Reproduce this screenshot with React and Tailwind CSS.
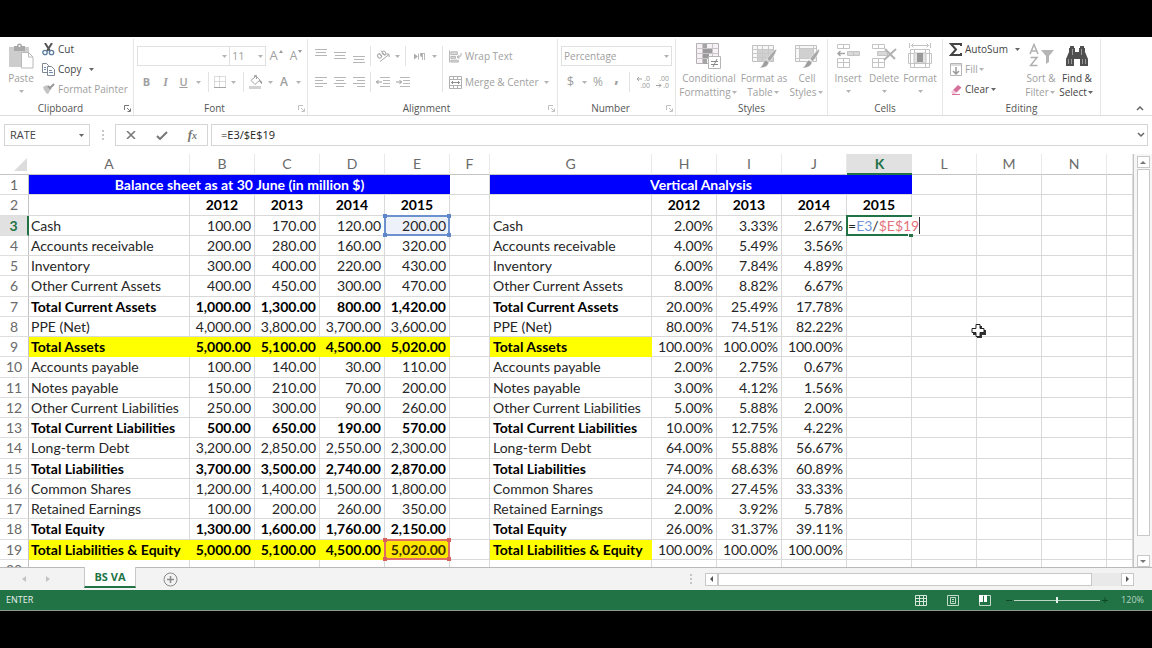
import { clsx } from "clsx";

const COLUMNS = [
  { name: "A", width: "w-[161px]" },
  { name: "B", width: "w-[65px]" },
  { name: "C", width: "w-[65px]" },
  { name: "D", width: "w-[65px]" },
  { name: "E", width: "w-[65px]" },
  { name: "F", width: "w-[40px]" },
  { name: "G", width: "w-[162px]" },
  { name: "H", width: "w-[65px]" },
  { name: "I", width: "w-[65px]" },
  { name: "J", width: "w-[65px]" },
  { name: "K", width: "w-[65px]" },
  { name: "L", width: "w-[65px]" },
  { name: "M", width: "w-[65px]" },
  { name: "N", width: "w-[65px]" },
  { name: "", width: "" },
];

const ROWS = [
  { label: "Cash", values: ["100.00", "170.00", "120.00", "200.00"], pct: ["2.00%", "3.33%", "2.67%"] },
  { label: "Accounts receivable", values: ["200.00", "280.00", "160.00", "320.00"], pct: ["4.00%", "5.49%", "3.56%"] },
  { label: "Inventory", values: ["300.00", "400.00", "220.00", "430.00"], pct: ["6.00%", "7.84%", "4.89%"] },
  { label: "Other Current Assets", values: ["400.00", "450.00", "300.00", "470.00"], pct: ["8.00%", "8.82%", "6.67%"] },
  { label: "Total Current Assets", bold: true, values: ["1,000.00", "1,300.00", "800.00", "1,420.00"], pct: ["20.00%", "25.49%", "17.78%"] },
  { label: "PPE (Net)", values: ["4,000.00", "3,800.00", "3,700.00", "3,600.00"], pct: ["80.00%", "74.51%", "82.22%"] },
  { label: "Total Assets", bold: true, fill: true, values: ["5,000.00", "5,100.00", "4,500.00", "5,020.00"], pct: ["100.00%", "100.00%", "100.00%"] },
  { label: "Accounts payable", values: ["100.00", "140.00", "30.00", "110.00"], pct: ["2.00%", "2.75%", "0.67%"] },
  { label: "Notes payable", values: ["150.00", "210.00", "70.00", "200.00"], pct: ["3.00%", "4.12%", "1.56%"] },
  { label: "Other Current Liabilities", values: ["250.00", "300.00", "90.00", "260.00"], pct: ["5.00%", "5.88%", "2.00%"] },
  { label: "Total Current Liabilities", bold: true, values: ["500.00", "650.00", "190.00", "570.00"], pct: ["10.00%", "12.75%", "4.22%"] },
  { label: "Long-term Debt", values: ["3,200.00", "2,850.00", "2,550.00", "2,300.00"], pct: ["64.00%", "55.88%", "56.67%"] },
  { label: "Total Liabilities", bold: true, values: ["3,700.00", "3,500.00", "2,740.00", "2,870.00"], pct: ["74.00%", "68.63%", "60.89%"] },
  { label: "Common Shares", values: ["1,200.00", "1,400.00", "1,500.00", "1,800.00"], pct: ["24.00%", "27.45%", "33.33%"] },
  { label: "Retained Earnings", values: ["100.00", "200.00", "260.00", "350.00"], pct: ["2.00%", "3.92%", "5.78%"] },
  { label: "Total Equity", bold: true, values: ["1,300.00", "1,600.00", "1,760.00", "2,150.00"], pct: ["26.00%", "31.37%", "39.11%"] },
  { label: "Total Liabilities & Equity", bold: true, fill: true, values: ["5,000.00", "5,100.00", "4,500.00", "5,020.00"], pct: ["100.00%", "100.00%", "100.00%"] },
];

const YEARS = ["2012", "2013", "2014", "2015"];

/* ---------- small ribbon pieces ---------- */

function Caret({ className = "w-2", dark }) {
  return (
    <span className={clsx("flex h-3 shrink-0 items-center justify-center", className)}>
      <svg width="5" height="3" viewBox="0 0 5 3" fill={dark ? "#666" : "#b4b4b4"}>
        <path d="M0 0h5L2.5 3z" />
      </svg>
    </span>
  );
}

function Sep({ className = "mx-1" }) {
  return <span className={clsx("w-px shrink-0 self-stretch bg-[#e3e3e3]", className)} />;
}

function Tool({ label, className, children }) {
  return (
    <button type="button" aria-label={label} className={clsx("flex h-5 shrink-0 items-center justify-center", className)}>
      {children}
    </button>
  );
}

function Group({ title, className, launcher, dark, children }) {
  return (
    <section className={clsx("flex shrink-0 flex-col border-r border-[#e6e6e6]", className)}>
      <div className="h-[60px]">{children}</div>
      <div className="flex h-4 items-center pt-0.5">
        <h2 className="flex-1 text-center leading-4 text-[#555]">{title}</h2>
        {launcher && (
          <button type="button" aria-label={`${title} settings`} className="flex w-3 justify-center">
            <svg width="7" height="7" viewBox="0 0 7 7" fill="none" stroke={dark ? "#777" : "#c0c0c0"}>
              <path d="M.5 5V.5H5M3 3l3 3M6.500 3.500v3h-3" />
            </svg>
          </button>
        )}
      </div>
    </section>
  );
}

function BigButton({ icon, lines, className, dark, caretBelow }) {
  return (
    <button type="button" className={clsx("flex shrink-0 flex-col items-center pt-1 leading-[14px] whitespace-nowrap", dark ? "text-[#444]" : "text-[#a0a0a0]", className)}>
      <span className="mb-0.5 flex h-[26px] items-center">{icon}</span>
      <span>{lines[0]}</span>
      {caretBelow ? (
        <Caret />
      ) : (
        <span className="flex items-center">
          {lines[1]}
          <Caret dark={dark} />
        </span>
      )}
    </button>
  );
}

function SmallButton({ icon, label, dark, caret, caretClass }) {
  return (
    <button type="button" className={clsx("flex h-5 items-center whitespace-nowrap", dark ? "text-[#444]" : "text-[#a0a0a0]")}>
      <span className="mr-[3px] flex w-[13px] justify-center">{icon}</span>
      {label}
      {caret && <Caret className={caretClass} dark={dark} />}
    </button>
  );
}

function Lines({ d }) {
  return (
    <svg width="12" height="16" viewBox="0 0 12 16" stroke="#b6b6b6" fill="none">
      <path d={d} />
    </svg>
  );
}

/* ---------- icons ---------- */

const PasteIcon = (
  <svg width="25" height="26" viewBox="0 0 25 26">
    <path d="M0 4h20v20H0z" fill="#cdcdcd" />
    <path d="M5 3h3a2.500 2.500 0 015 0h3v5H5z" fill="#a9a9a9" />
    <circle cx="10.500" cy="3" r="1" fill="#fff" />
    <path d="M12.500 9.500h7l4.500 4.500v11H12.500z" fill="#fff" stroke="#b9b9b9" />
    <path d="M19.500 9.500V14H24" fill="none" stroke="#b9b9b9" />
  </svg>
);

const CutIcon = (
  <svg width="13" height="13" viewBox="0 0 13 13" fill="none">
    <path d="M3 0l5 8M10 0L5 8" stroke="#555" strokeWidth="2" />
    <circle cx="3" cy="9.500" r="2.200" stroke="#5d7d9e" strokeWidth="1.300" />
    <circle cx="9.500" cy="9.500" r="2.200" stroke="#5d7d9e" strokeWidth="1.300" />
  </svg>
);

const CopyIcon = (
  <svg width="13" height="13" viewBox="0 0 13 13" fill="#fff" stroke="#7d8791">
    <path d="M.5.5h4l2 2v7h-6z" />
    <path d="M5.500 3.500h4l3 3v6h-7z" />
    <path d="M2 4.500h2M2 6.500h2M7 7.500h3M7 9.500h4" stroke="#6d8fb3" />
  </svg>
);

const PainterIcon = (
  <svg width="12" height="12" viewBox="0 0 12 12">
    <path d="M0 4l4-2 4 4-3 5-2-1-1-2-1-1z" fill="#c4c4c4" />
    <path d="M5 3l3 3M7.500 4.500L11 1" stroke="#999" strokeWidth="2" fill="none" />
  </svg>
);

const BordersIcon = (
  <svg width="12" height="12" viewBox="0 0 12 12" fill="none" stroke="#b8b8b8">
    <path d="M.5.500h11v11H.500zM.500 5.500h11M5.500.500v11" strokeDasharray="1 1" />
    <path d="M0 11.500h12" stroke="#a5a5a5" />
  </svg>
);

const BucketIcon = (
  <svg width="15" height="14" viewBox="0 0 15 14" fill="none">
    <path d="M2 5.500L7 1l4 4-5 4.500z" stroke="#a5a5a5" />
    <path d="M5.500 3V.500h2V4" stroke="#a5a5a5" />
    <path d="M11 5c2 1 2.500 3 2 4-1 0-1.500-2-3-3z" fill="#999" />
    <path d="M0 11h12v3H0z" fill="#d2d2d2" />
  </svg>
);

const OrientIcon = (
  <svg width="14" height="13" viewBox="0 0 14 13" fill="none" stroke="#a8a8a8">
    <ellipse cx="3.500" cy="6" rx="1.800" ry="2.200" transform="rotate(-40 3.500 6)" />
    <path d="M3 3l3 4M5 .500l4 5" />
    <ellipse cx="8" cy="3" rx="1.500" ry="2" transform="rotate(-40 8 3)" />
    <path d="M4 11.500l9-7M10 4h3v3" />
  </svg>
);

const RtlIcon = (
  <svg width="12" height="9" viewBox="0 0 12 9">
    <path d="M0 1.500L4 4.500 0 7.500z" fill="#acacac" />
    <path d="M4.500 1.500v6M8.500 1v7M10.500 1v7M6 1.500h5" stroke="#b8b8b8" fill="none" />
    <path d="M8 1a2 2 0 000 4z" fill="#acacac" />
  </svg>
);

const WrapIcon = (
  <svg width="14" height="13" viewBox="0 0 14 13" fill="none" stroke="#b0b0b0">
    <path d="M.500 0v13" />
    <path d="M2 1.500h7v3H2zM2 6.500h5v2H2zM2 10.500h8v2H2z" fill="#ddd" />
    <path d="M13 3c0 4-1 4-4 4M11 5L9 7l2 2" stroke="#999" />
  </svg>
);

const MergeIcon = (
  <svg width="13" height="13" viewBox="0 0 13 13" fill="none" stroke="#b0b0b0">
    <path d="M.500.500h12v12H.500zM.500 3.500h12M.500 9.500h12M4.500.500v3M8.500.500v3M4.500 9.500v3M8.500 9.500v3" />
    <path d="M2 6.500h9M4 5L2.500 6.500 4 8M9 5l1.500 1.500L9 8" stroke="#8f8f8f" />
  </svg>
);

function IndentIcon({ right }) {
  return (
    <svg width="14" height="11" viewBox="0 0 14 11" fill="none" stroke="#b8b8b8">
      <path d="M4 .500h10M7 3.500h7M7 6.500h7M4 9.500h10" />
      <path d={right ? "M0 5h6M3.500 3L5.500 5 3.500 7" : "M0 5h6M2.500 3L.500 5l2 2"} stroke="#999" />
    </svg>
  );
}

function DecimalIcon({ top, bottom, arrow }) {
  return (
    <svg width="14" height="14" viewBox="0 0 14 14">
      <text x="13" y="6" textAnchor="end" fontSize="7" fill="#999">{top}</text>
      <text x="13" y="13" textAnchor="end" fontSize="7" fill="#999">{bottom}</text>
      <path d={arrow} stroke="#a3a3a3" fill="none" />
    </svg>
  );
}

const ConditionalIcon = (
  <svg width="26" height="26" viewBox="0 0 26 26" fill="none">
    <path d="M.500.500h22v20H.500z" fill="#f6f1f4" stroke="#b5b0b3" />
    <path d="M7 1h4v5H7zM7 16h4v5H7z" fill="#a5a5a5" />
    <path d="M7 6h9v4H7zM7 11h6v4H7z" fill="#9a9a9a" />
    <path d="M.500 5.500h22M.500 10.500h22M.500 15.500h22M6.500.500v20M16.500.500v20" stroke="#c9c4c7" />
    <path d="M12.500 13.500h12v12h-12z" fill="#fff" stroke="#b5b5b5" />
    <path d="M15 18.500h7M15 21.500h7M21 16l-4 8" stroke="#888" />
  </svg>
);

function BrushTable({ wide }) {
  return (
    <svg width="26" height="26" viewBox="0 0 26 26" fill="none">
      <path d="M1.500 2.500h21v16h-21z" fill="#f8f8f8" stroke="#c0c0c0" />
      <path d={wide ? "M6 6h13v9H6z" : "M7 7h15v11H7z"} fill="#d0d0d0" />
      <path d={wide ? "M1.500 5.500h21M1.500 15.500h21M5.500 2.500v16M19.500 2.500v16" : "M1.500 6.500h21M1.500 10.500h21M1.500 14.500h21M6.500 2.500v16M11.500 2.500v16M17.500 2.500v16"} stroke="#c8c8c8" />
      <path d="M25.500 6c-2 .500-7.500 6.500-9.500 10l2.500 2.500C21.500 15 25.500 10 25.500 6z" fill="#a8a8a8" stroke="#fff" strokeWidth=".5" />
      <path d="M15 17l3 2.500c-1 4-5 5.500-10 5.500 2-1 3-2 4-4.500.500-1.500 1.500-3 3-3.500z" fill="#9e9e9e" stroke="#fff" strokeWidth=".5" />
    </svg>
  );
}

const InsertIcon = (
  <svg width="24" height="24" viewBox="0 0 24 24" fill="none" stroke="#c4c4c4">
    <path d="M1.500.500h12v4h-12zM7.500.500v4M1.500 14.500h12v9h-12zM7.500 14.500v9M1.500 18.500h12" />
    <path d="M11.500 7.500h12v4h-12z" fill="#d8d8d8" />
    <path d="M17.500 7.500v4" />
    <path d="M2 9.500h7M4.500 7L2 9.500 4.500 12" stroke="#a5a5a5" strokeWidth="1.500" />
  </svg>
);

const DeleteIcon = (
  <svg width="26" height="24" viewBox="0 0 26 24" fill="none" stroke="#c4c4c4">
    <path d="M1.500.500h12v4h-12zM7.500.500v4M1.500 14.500h12v9h-12zM7.500 14.500v9M1.500 18.500h12" />
    <path d="M6.500 7.500h10v4h-10z" fill="#d8d8d8" />
    <path d="M14 5l10 10M25 5L13 16" stroke="#b2b2b2" strokeWidth="2" />
  </svg>
);

const FormatIcon = (
  <svg width="25" height="26" viewBox="0 0 25 26" fill="none" stroke="#c4c4c4">
    <path d="M1.500 0v5M22.500 0v5M3 2.500h18M5.500.500l-2 2 2 2M18.500.500l2 2-2 2" />
    <path d="M2.500 6.500h19v18h-19zM.500 10.500h23v10H.500zM6.500 6.500v18M17.500 6.500v18" />
    <path d="M6 10h12v10H6z" fill="#e4e4e4" />
    <path d="M9 10h6v9H9z" fill="#999" stroke="none" />
  </svg>
);

const SumIcon = (
  <svg width="13" height="13" viewBox="0 0 13 13" fill="none" stroke="#444" strokeWidth="2">
    <path d="M12 3V1H2l5 5.500L2 12h10v-2" />
  </svg>
);

const FillIcon = (
  <svg width="12" height="13" viewBox="0 0 12 13" fill="none" stroke="#b5b5b5">
    <path d="M.500.500h11v12H.500zM0 2h12" />
    <path d="M6 4v7M3 8l3 3 3-3" stroke="#999" strokeWidth="1.500" />
  </svg>
);

const EraserIcon = (
  <svg width="12" height="11" viewBox="0 0 12 11">
    <path d="M3 6l5-5 3.500 2.500-5 5z" fill="#d4709a" />
    <path d="M3 6l3.500 2.500L5 10H2.500L1 8z" fill="#f1c6d8" />
    <path d="M2 10.500h8" stroke="#d4709a" />
  </svg>
);

const SortIcon = (
  <svg width="25" height="26" viewBox="0 0 25 26">
    <path d="M1 11L5 1.500 9 11M2.500 8h5M1.500 14.500h6.500L1.500 22.500H8.500" fill="none" stroke="#b0b0b0" strokeWidth="1.500" />
    <path d="M12 7h13l-5 6v6l-3 2v-8z" fill="#b5b5b5" />
  </svg>
);

const FindIcon = (
  <svg width="24" height="24" viewBox="0 0 24 24" fill="#4f4f4f">
    <path d="M5 2h4v2h1v4h4V4h1V2h4v2h1v4l3 7v7h-8v-7h-6v7H1v-7l3-7V4h1z" />
    <path d="M3.500 15v5M6.500 15v5M17.500 15v5M20.500 15v5M7.500 5v6M16.500 5v6" stroke="#999" />
  </svg>
);

/* ---------- ribbon ---------- */

function Ribbon() {
  return (
    <div className="flex shrink-0 overflow-hidden border-b border-[#dcdcdc] bg-white pt-0.5 font-['Open_Sans',sans-serif] text-[10px] text-[#a0a0a0]">
      <Group title="Clipboard" className="w-[134px]" launcher dark>
        <div className="flex pl-[7px]">
          <BigButton icon={PasteIcon} lines={["Paste"]} className="w-7" caretBelow />
          <div className="ml-[7px] flex flex-col">
            <SmallButton icon={CutIcon} label="Cut" dark />
            <SmallButton icon={CopyIcon} label="Copy" dark caret caretClass="w-5" />
            <SmallButton icon={PainterIcon} label="Format Painter" />
          </div>
        </div>
      </Group>

      <Group title="Font" className="w-[174px]" launcher>
        <div className="flex flex-col gap-1.5 pt-[7px] pl-[3px]">
          <div className="flex h-5 items-center">
            <div className="relative flex">
              <select aria-label="Font" className="h-5 w-[93px] appearance-none border border-[#e0e0e0]" />
              <span className="absolute top-1 right-0.5"><Caret /></span>
            </div>
            <div className="relative flex">
              <select aria-label="Font size" defaultValue="11" className="h-5 w-9 appearance-none border border-l-0 border-[#e0e0e0] pl-0.5 text-[11px]">
                <option>11</option>
              </select>
              <span className="absolute top-1 right-0.5"><Caret /></span>
            </div>
            <Tool label="Increase font size" className="w-5 gap-px text-[13px]">A<svg width="4" height="12" viewBox="0 0 4 12" fill="#999"><path d="M0 3l2-3 2 3z" /></svg></Tool>
            <Tool label="Decrease font size" className="w-5 gap-px text-[12px]">A<svg width="4" height="12" viewBox="0 0 4 12" fill="#999"><path d="M0 0h4L2 3z" /></svg></Tool>
          </div>
          <div className="flex h-5 items-center text-[11px]">
            <Tool label="Bold" className="w-[19px] font-bold">B</Tool>
            <Tool label="Italic" className="w-[19px] font-['Liberation_Serif',serif] text-[12px] font-bold italic">I</Tool>
            <Tool label="Underline" className="w-[17px] font-semibold underline">U</Tool>
            <Caret className="w-3" />
            <Sep />
            <Tool label="Borders" className="w-[13px]">{BordersIcon}</Tool>
            <Caret className="w-[15px]" />
            <Sep className="mx-0.5" />
            <Tool label="Fill colour" className="w-5">{BucketIcon}</Tool>
            <Caret />
            <Tool label="Font colour" className="w-5 text-[12px] font-semibold">A</Tool>
            <Caret />
          </div>
        </div>
      </Group>

      <Group title="Alignment" className="w-[250px]" launcher>
        <div className="flex pt-[7px] pl-[3px]">
          <div className="flex flex-col gap-1.5">
            <div className="flex h-5 items-center">
              <Tool label="Top align" className="w-[19px]"><Lines d="M0 1.500h12M1 4.500h10M0 7.500h12" /></Tool>
              <Tool label="Middle align" className="w-[19px]"><Lines d="M0 4.500h12M1 7.500h10M0 10.500h12" /></Tool>
              <Tool label="Bottom align" className="w-[19px]"><Lines d="M0 8.500h12M1 11.500h10M0 14.500h12" /></Tool>
              <Sep className="mx-0.5" />
              <Tool label="Orientation" className="w-5">{OrientIcon}</Tool>
              <Caret />
              <Sep />
              <Tool label="Text direction" className="w-5">{RtlIcon}</Tool>
              <Caret />
            </div>
            <div className="flex h-5 items-center">
              <Tool label="Align left" className="w-[19px]"><Lines d="M0 3.500h12M0 6.500h8M0 9.500h12M0 12.500h8" /></Tool>
              <Tool label="Center" className="w-[19px]"><Lines d="M0 3.500h12M2 6.500h8M0 9.500h12M2 12.500h8" /></Tool>
              <Tool label="Align right" className="w-[19px]"><Lines d="M0 3.500h12M4 6.500h8M0 9.500h12M4 12.500h8" /></Tool>
              <Sep className="mx-0.5" />
              <Tool label="Decrease indent" className="w-5"><IndentIcon /></Tool>
              <Tool label="Increase indent" className="w-5"><IndentIcon right /></Tool>
            </div>
          </div>
          <Sep className="mr-1.5 ml-1" />
          <div className="flex flex-col gap-1.5">
            <SmallButton icon={WrapIcon} label="Wrap Text" />
            <SmallButton icon={MergeIcon} label="Merge & Center" caret caretClass="w-4" />
          </div>
        </div>
      </Group>

      <Group title="Number" className="w-[118px]" launcher>
        <div className="flex flex-col gap-1.5 px-[3px] pt-[7px]">
          <div className="relative flex">
            <select aria-label="Number format" defaultValue="Percentage" className="h-5 w-full appearance-none border border-[#e0e0e0] pl-0.5">
              <option>Percentage</option>
            </select>
            <span className="absolute top-1 right-0.5"><Caret /></span>
          </div>
          <div className="flex h-5 items-center">
            <Tool label="Currency" className="w-[19px] text-[13px]">$</Tool>
            <Caret />
            <Tool label="Percent" className="w-5 text-[12px]">%</Tool>
            <Tool label="Thousands separator" className="w-[17px] pb-2.5 text-[16px] font-bold">,</Tool>
            <Sep />
            <Tool label="Increase decimal" className="w-[19px]"><DecimalIcon top=".0" bottom=".00" arrow="M0 4h5M2 2L0 4l2 2" /></Tool>
            <Tool label="Decrease decimal" className="w-[19px]"><DecimalIcon top=".00" bottom=".0" arrow="M0 10.500h5M3 8.500l2 2-2 2" /></Tool>
          </div>
        </div>
      </Group>

      <Group title="Styles" className="w-[152px]">
        <div className="flex gap-0.5 pl-[3px]">
          <BigButton icon={ConditionalIcon} lines={["Conditional", "Formatting"]} className="w-[60px]" />
          <BigButton icon={<BrushTable />} lines={["Format as", "Table"]} className="w-[46px]" />
          <BigButton icon={<BrushTable wide />} lines={["Cell", "Styles"]} className="w-[36px]" />
        </div>
      </Group>

      <Group title="Cells" className="w-[115px]">
        <div className="flex pl-0.5">
          <BigButton icon={InsertIcon} lines={["Insert"]} className="w-9" caretBelow />
          <BigButton icon={DeleteIcon} lines={["Delete"]} className="w-9" caretBelow />
          <BigButton icon={FormatIcon} lines={["Format"]} className="w-9" caretBelow />
        </div>
      </Group>

      <Group title="Editing" className="w-[158px]">
        <div className="flex pl-1.5">
          <div className="flex w-[74px] flex-col">
            <SmallButton icon={SumIcon} label="AutoSum" dark caret caretClass="w-5" />
            <SmallButton icon={FillIcon} label="Fill" caret />
            <SmallButton icon={EraserIcon} label="Clear" dark caret />
          </div>
          <BigButton icon={SortIcon} lines={["Sort &", "Filter"]} className="w-9" />
          <BigButton icon={FindIcon} lines={["Find &", "Select"]} className="w-9" dark />
        </div>
      </Group>

      <div className="flex flex-1 items-end justify-end pr-2 pb-1">
        <button type="button" aria-label="Collapse the ribbon">
          <svg width="8" height="6" viewBox="0 0 8 6" fill="none" stroke="#666" strokeWidth="1.500">
            <path d="M1 5l3-3 3 3" />
          </svg>
        </button>
      </div>
    </div>
  );
}

function FormulaBar() {
  return (
    <div className="flex h-[38px] shrink-0 items-center bg-white px-1 font-['Open_Sans',sans-serif] text-[11px] text-[#444]">
      <div className="flex h-[22px] w-[86px] items-center border border-[#d5d5d5]">
        <input aria-label="Name box" defaultValue="RATE" className="w-full min-w-0 pl-[5px] outline-none" />
        <button type="button" aria-label="Names" className="flex w-4 shrink-0 justify-center"><Caret dark /></button>
      </div>
      <span className="flex w-[25px] justify-center">
        <svg width="2" height="10" viewBox="0 0 2 10" fill="#c8c8c8"><path d="M0 0h2v2H0zM0 4h2v2H0zM0 8h2v2H0z" /></svg>
      </span>
      <div className="flex h-[22px] w-[93px] items-center justify-around border border-[#d5d5d5]">
        <button type="button" aria-label="Cancel">
          <svg width="10" height="8" viewBox="0 0 10 8" stroke="#777" strokeWidth="1.500"><path d="M1 0l8 8M9 0L1 8" /></svg>
        </button>
        <button type="button" aria-label="Enter">
          <svg width="12" height="9" viewBox="0 0 12 9" fill="none" stroke="#777" strokeWidth="2"><path d="M1 5l3 3 7-7" /></svg>
        </button>
        <button type="button" aria-label="Insert function" className="font-['Liberation_Serif',serif] text-[13px] font-bold italic text-[#777]">
          f<span className="text-[10px]">x</span>
        </button>
      </div>
      <div className="ml-[3px] flex h-[22px] flex-1 items-center border border-[#d5d5d5]">
        <input aria-label="Formula" defaultValue="=E3/$E$19" className="min-w-0 flex-1 pl-[9px] text-[#222] outline-none" />
        <button type="button" aria-label="Expand formula bar" className="flex w-3 justify-center">
          <svg width="8" height="6" viewBox="0 0 8 6" fill="none" stroke="#666" strokeWidth="1.500"><path d="M1 1l3 3 3-3" /></svg>
        </button>
      </div>
    </div>
  );
}

/* ---------- sheet ---------- */

// Every fourth row is a pixel taller, so the 120% zoom adds up
const rowHeight = (n) => (n % 4 === 2 ? "h-[21px]" : "h-5");

const LINE = "border-r border-b border-[#d9d9d9]";

function RowHead({ n }) {
  return (
    <th
      scope="row"
      className={clsx(
        "border-b border-[#dedede] p-0 text-center",
        n === 3
          ? "border-r-2 border-r-[#217346] bg-[#e1e1e1] font-bold text-[#217346]"
          : "border-r border-r-[#c4c4c4] font-normal text-[#6a6a6a]"
      )}
    >
      {n}
    </th>
  );
}

function RefBox({ tone }) {
  const edge = tone === "blue" ? "border-[#6d91cf]" : "border-[#de6d66]";
  const knob = tone === "blue" ? "bg-[#5f86c8]" : "bg-[#d9605c]";
  return (
    <span className={clsx("pointer-events-none absolute -top-px -right-px -bottom-px -left-px border-2", edge)}>
      <i className={clsx("absolute -top-[3px] -left-[3px] size-1", knob)} />
      <i className={clsx("absolute -top-[3px] -right-[3px] size-1", knob)} />
      <i className={clsx("absolute -bottom-[3px] -left-[3px] size-1", knob)} />
      <i className={clsx("absolute -right-[3px] -bottom-[3px] size-1", knob)} />
    </span>
  );
}

function Empty({ count }) {
  return Array.from({ length: count }, (_, i) => <td key={i} className={LINE} />);
}

function DataRow({ row, n }) {
  const weight = row.bold ? "font-bold text-black" : "";
  const fill = row.fill ? "border-r border-b border-[#ffff00] bg-[#ffff00]" : LINE;
  return (
    <tr className={rowHeight(n)}>
      <RowHead n={n} />
      <td className={clsx("p-0 pl-0.5", weight, fill)}>{row.label}</td>
      {row.values.map((v, i) => {
        if (i === 3 && n === 3) {
          return (
            <td key={i} className={clsx("relative bg-[#edf1fa] p-0 pr-[3px] text-right", LINE)}>
              {v}
              <RefBox tone="blue" />
            </td>
          );
        }
        if (i === 3 && n === 19) {
          return (
            <td key={i} className="relative border-r border-b border-[#ffe600] bg-[#ffe600] p-0 pr-[3px] text-right font-bold text-[#3a2a00]">
              {v}
              <RefBox tone="red" />
            </td>
          );
        }
        return (
          <td key={i} className={clsx("p-0 pr-[3px] text-right", weight, fill)}>{v}</td>
        );
      })}
      <Empty count={1} />
      <td className={clsx("p-0 pl-[3px]", weight, fill)}>{row.label}</td>
      {row.pct.map((v, i) => (
        <td key={i} className={clsx("p-0 pr-[3px] text-right", LINE)}>{v}</td>
      ))}
      {n === 3 ? (
        <td className={clsx("relative p-0", LINE)}>
          <span className="absolute -top-px -right-px -bottom-px -left-px border-2 border-[#217346]">
            <i className="absolute -right-[3px] -bottom-[3px] size-[5px] border-t border-l border-white bg-[#217346]" />
          </span>
          <span className="absolute top-px left-px z-10 flex h-[17px] items-center border-r border-[#333] bg-white whitespace-pre">
            =<span className="text-[#7396d8]">E3</span>/<span className="text-[#e4727c]">$E$19</span>
          </span>
        </td>
      ) : (
        <Empty count={1} />
      )}
      <Empty count={4} />
    </tr>
  );
}

function Sheet() {
  return (
    <div className="flex min-h-0 flex-1 bg-white">
      <div className="relative min-w-0 flex-1 overflow-hidden border-r border-[#c4c4c4] font-['Lato',sans-serif] text-[14px] leading-[18px] text-[#262626]">
        <table className="w-full table-fixed border-separate border-spacing-0">
          <colgroup>
            <col className="w-[29px]" />
            {COLUMNS.map((c, i) => (
              <col key={i} className={c.width} />
            ))}
          </colgroup>
          <thead>
            <tr className="h-[21px] text-[#6a6a6a]">
              <th aria-label="Select all" className="border-b border-[#c4c4c4] p-0">
                <svg width="13" height="13" viewBox="0 0 13 13" className="mr-0.5 ml-auto" fill="#dcdcdc"><path d="M13 0v13H0z" /></svg>
              </th>
              {COLUMNS.map((c, i) => (
                <th
                  key={i}
                  scope="col"
                  className={clsx(
                    "p-0 text-center",
                    c.name === "K"
                      ? "border-b-2 border-[#217346] bg-[#e1e1e1] font-bold text-[#217346]"
                      : "border-r border-b border-r-[#e9e9e9] border-b-[#c4c4c4] font-normal"
                  )}
                >
                  {c.name}
                </th>
              ))}
            </tr>
          </thead>
          <tbody>
            <tr className="h-5">
              <RowHead n={1} />
              <td colSpan={5} className="border-b border-[#d9d9d9] bg-[#0000ff] p-0 text-center font-bold text-white">
                Balance sheet as at 30 June (in million $)
              </td>
              <Empty count={1} />
              <td colSpan={5} className="border-b border-[#d9d9d9] bg-[#0000ff] p-0 text-center font-bold text-white">
                Vertical Analysis
              </td>
              <Empty count={4} />
            </tr>
            <tr className="h-[21px]">
              <RowHead n={2} />
              <Empty count={1} />
              {YEARS.map((y) => (
                <td key={y} className={clsx("p-0 text-center font-bold text-black", LINE)}>{y}</td>
              ))}
              <Empty count={2} />
              {YEARS.map((y) => (
                <td key={y} className={clsx("p-0 text-center font-bold text-black", LINE)}>{y}</td>
              ))}
              <Empty count={4} />
            </tr>
            {ROWS.map((row, i) => (
              <DataRow key={row.label} row={row} n={i + 3} />
            ))}
            <tr className="h-5">
              <RowHead n={20} />
              <Empty count={15} />
            </tr>
          </tbody>
        </table>

        {/* mouse pointer */}
        <svg width="15" height="15" viewBox="0 0 15 15" className="absolute top-[169px] left-[971px]">
          <path d="M6 3h5v4h4v5h-4v3H6v-3H2V7h4z" fill="#333" />
          <path d="M5 1.500h4v4h4v4H9v4H5v-4H1v-4h4z" fill="#fff" stroke="#222" />
        </svg>
      </div>

      {/* vertical scroll bar */}
      <div className="flex w-[18px] flex-col items-center bg-[#f6f6f6] pt-0.5">
        <button type="button" aria-label="Scroll up" className="flex h-3 w-[13px] shrink-0 items-center justify-center border border-[#c8c8c8] bg-white">
          <svg width="6" height="3" viewBox="0 0 6 3" fill="#777"><path d="M0 3h6L3 0z" /></svg>
        </button>
        <div className="mt-px w-[13px] grow-[19] border border-[#c8c8c8] bg-white" />
        <div className="grow" />
        <button type="button" aria-label="Scroll down" className="flex h-3 w-[13px] shrink-0 items-center justify-center border border-[#c8c8c8] bg-white">
          <svg width="6" height="3" viewBox="0 0 6 3" fill="#777"><path d="M0 0h6L3 3z" /></svg>
        </button>
      </div>
    </div>
  );
}

function SheetTabs() {
  return (
    <div className="flex h-[23px] shrink-0 border-t border-[#b9b9b9] bg-[#f3f3f3]">
      <div className="flex w-[84px] items-center gap-5 pl-[22px]">
        <button type="button" aria-label="Previous sheet"><svg width="4" height="6" viewBox="0 0 4 6" fill="#c4c4c4"><path d="M4 0v6L0 3z" /></svg></button>
        <button type="button" aria-label="Next sheet"><svg width="4" height="6" viewBox="0 0 4 6" fill="#c4c4c4"><path d="M0 0v6l4-3z" /></svg></button>
      </div>
      <button type="button" className="-mt-px h-[21px] w-[52px] border-x border-b-2 border-x-[#c8c8c8] border-b-[#217346] bg-white font-['Open_Sans',sans-serif] text-[11px] leading-[19px] font-bold text-[#217346]">
        BS VA
      </button>
      <button type="button" aria-label="New sheet" className="ml-[27px]">
        <svg width="15" height="15" viewBox="0 0 15 15" fill="none" stroke="#8a8a8a">
          <circle cx="7.500" cy="7.500" r="6.500" />
          <path d="M7.500 4v7M4 7.500h7" strokeWidth="1.500" />
        </svg>
      </button>
      <div className="flex-1" />
      <div className="mr-[18px] flex w-[444px] items-center">
        <svg width="2" height="10" viewBox="0 0 2 10" fill="#c4c4c4"><path d="M0 0h2v2H0zM0 4h2v2H0zM0 8h2v2H0z" /></svg>
        <button type="button" aria-label="Scroll left" className="ml-[13px] flex h-[13px] w-[13px] items-center justify-center border border-[#c8c8c8] bg-white">
          <svg width="3" height="6" viewBox="0 0 3 6" fill="#555"><path d="M3 0v6L0 3z" /></svg>
        </button>
        <div className="h-[13px] w-[374px] border border-[#c8c8c8] bg-white" />
        <div className="h-[13px] flex-1 bg-[#e9e9e9]" />
        <button type="button" aria-label="Scroll right" className="flex h-[13px] w-[13px] items-center justify-center border border-[#c8c8c8] bg-white">
          <svg width="3" height="6" viewBox="0 0 3 6" fill="#555"><path d="M0 0v6l3-3z" /></svg>
        </button>
      </div>
    </div>
  );
}

function StatusBar() {
  return (
    <footer className="flex h-[21px] shrink-0 items-center border-b border-[#8a9a90] bg-[#217346] pr-2 pl-1.5 font-['Open_Sans',sans-serif] text-[9px] text-[#e6f0ea]">
      <span className="flex-1">ENTER</span>
      <div className="flex gap-5">
        <button type="button" aria-label="Normal view">
          <svg width="12" height="11" viewBox="0 0 12 11" fill="none" stroke="#d6e8dc"><path d="M.500.500h11v10H.500zM.500 3.500h11M.500 6.500h11M4.500.500v10M8.500.500v10" /></svg>
        </button>
        <button type="button" aria-label="Page layout">
          <svg width="12" height="11" viewBox="0 0 12 11" fill="none" stroke="#c3dbcb"><path d="M.500.500h11v10H.500zM3.500 2.500h5v6h-5zM5 4.500h2M5 6.500h2" /></svg>
        </button>
        <button type="button" aria-label="Page break preview">
          <svg width="12" height="11" viewBox="0 0 12 11" fill="none"><path d="M.500.500h11v10H.500z" stroke="#c3dbcb" /><path d="M0 0h4v7H0zM5 0h3v7H5z" fill="#fff" /></svg>
        </button>
      </div>
      <div className="ml-[15px] flex w-[102px] items-center gap-0.5 text-[#0f4a28]">
        <button type="button" aria-label="Zoom out" className="w-1.5">
          <svg width="6" height="6" viewBox="0 0 6 6" stroke="currentColor"><path d="M0 3.500h6" /></svg>
        </button>
        <input
          type="range"
          aria-label="Zoom"
          defaultValue="50"
          className="h-3 min-w-0 flex-1 appearance-none bg-[linear-gradient(#b9d5c3,#b9d5c3)] bg-[length:100%_1px] bg-center bg-no-repeat [&::-webkit-slider-thumb]:h-1.5 [&::-webkit-slider-thumb]:w-0.5 [&::-webkit-slider-thumb]:appearance-none [&::-webkit-slider-thumb]:bg-[#e6f0ea]"
        />
        <button type="button" aria-label="Zoom in" className="w-1.5">
          <svg width="6" height="6" viewBox="0 0 6 6" stroke="currentColor"><path d="M0 3.500h6M3 .500v6" /></svg>
        </button>
      </div>
      <span className="w-9 text-right text-[#b5d3c0]">120%</span>
    </footer>
  );
}

export default function App() {
  return (
    <div className="flex h-screen min-h-[400px] flex-col bg-black py-[37px]">
      <Ribbon />
      <FormulaBar />
      <Sheet />
      <SheetTabs />
      <StatusBar />
    </div>
  );
}
